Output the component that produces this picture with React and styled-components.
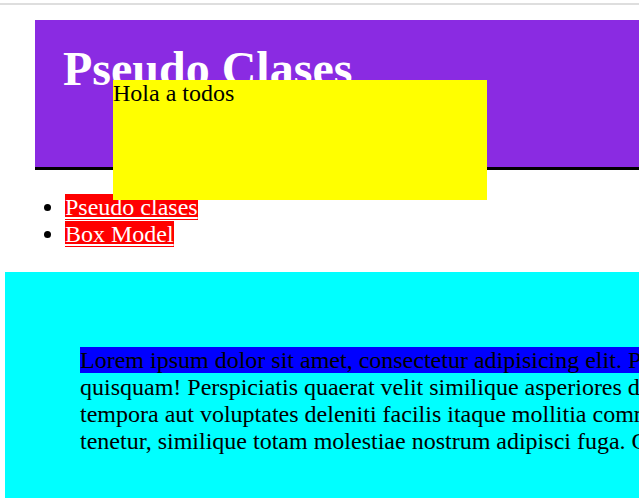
import React from "react";
import styled, { createGlobalStyle } from "styled-components";

const Global = createGlobalStyle`
  html, body { margin: 0; padding: 0; overflow: hidden; background: #fff; }
  body { font-family: "Liberation Serif", "Times New Roman", serif; color: #000; }
`;

const Page = styled.div`
  width: 1000px;
  padding-top: 3px;
`;

const TopRule = styled.div`
  height: 2px;
  background: #dedede;
`;

const Header = styled.header`
  position: relative;
  margin: 15px 0 0 35px;
  height: 126px;
  padding: 21px 28px 0;
  background: #8a2be2;
  border-bottom: 3px solid #000;
`;

const Title = styled.h1`
  margin: 0;
  font-size: 48px;
  font-weight: bold;
  color: #fff;
  line-height: normal;
`;

const Overlay = styled.div`
  position: absolute;
  left: 78px;
  top: 60px;
  width: 374px;
  height: 120px;
  background: #ffff00;
  font-size: 24px;
  line-height: normal;
`;

const Nav = styled.ul`
  margin: 24px 0;
  padding-left: 65px;
  font-size: 24px;
  line-height: normal;
`;

const Item = styled.li``;

const NavLink = styled.a`
  background: #ff0000;
  color: #fff;
  text-decoration: underline;
`;

const Section = styled.section`
  margin-left: 5px;
  padding: 51px 0 80px 75px;
  background: #00ffff;
  min-height: 200px;
`;

const Text = styled.p`
  margin: 24px 0 0;
  font-size: 24px;
  line-height: normal;
  white-space: nowrap;
  &::first-line {
    background: #0000ff;
  }
`;

export default function App() {
  return (
    <>
      <Global />
      <Page>
        <TopRule />
        <Header>
          <Title>Pseudo Clases</Title>
          <Overlay>Hola a todos</Overlay>
        </Header>
        <Nav>
          <Item>
            <NavLink href="#">Pseudo clases</NavLink>
          </Item>
          <Item>
            <NavLink href="#">Box Model</NavLink>
          </Item>
        </Nav>
        <Section>
          <Text>
            Lorem ipsum dolor sit amet, consectetur adipisicing elit. Possimus, ipsam
            <br />
            quisquam! Perspiciatis quaerat velit similique asperiores dolorum,
            <br />
            tempora aut voluptates deleniti facilis itaque mollitia commodi
            <br />
            tenetur, similique totam molestiae nostrum adipisci fuga. Quos.
          </Text>
        </Section>
      </Page>
    </>
  );
}
